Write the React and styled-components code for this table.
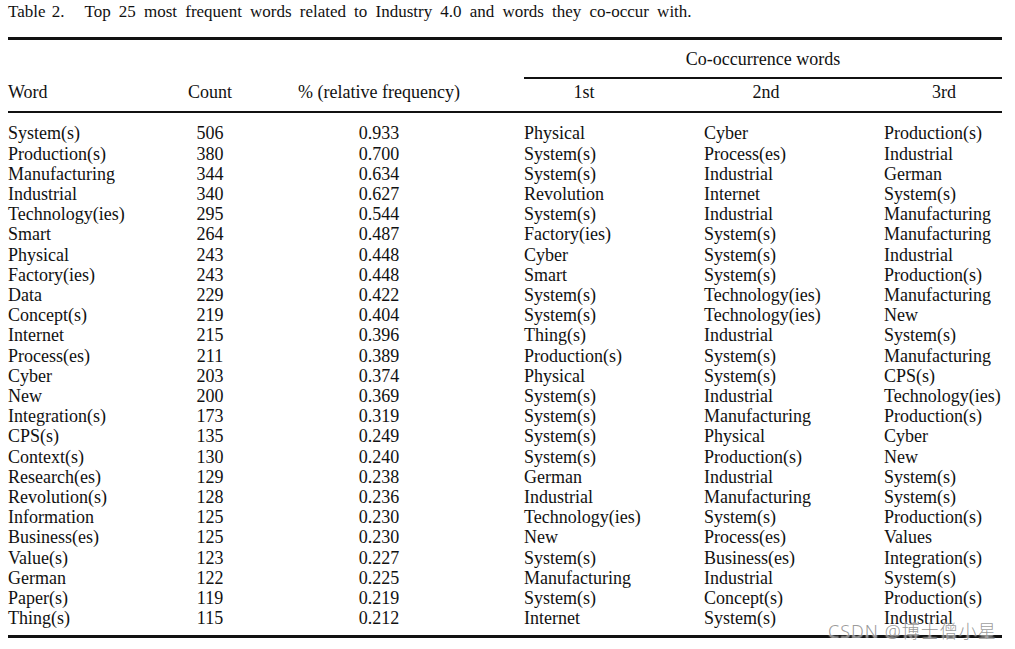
import React from "react";
import styled, { createGlobalStyle } from "styled-components";

const GlobalStyle = createGlobalStyle`
  html, body {
    margin: 0;
    padding: 0;
    background: #ffffff;
  }
  body {
    font-family: "Liberation Serif", "Times New Roman", serif;
    color: #111;
  }
`;

const Page = styled.div`
  position: relative;
  width: 1015px;
  height: 649px;
  padding: 3px 13px 0 8px;
  box-sizing: border-box;
  overflow: hidden;
`;

const Caption = styled.div`
  font-size: 17px;
  line-height: 18px;
  word-spacing: 3.9px;
  white-space: nowrap;
  margin-bottom: 16px;
`;

const Label = styled.span`
  margin-right: 20px;
  word-spacing: 2px;
`;

const Rule = styled.div`
  height: ${(p) => p.$size}px;
  background: #111;
`;

const Grid = styled.div`
  display: grid;
  grid-template-columns: 150px 104px 234px 28px 180px 180px 118px;
  font-size: 18px;
  line-height: 20.2px;
`;

const GroupHead = styled.div`
  grid-column: 5 / 8;
  text-align: center;
  padding: 9px 0 8px 0;
`;

const GroupRule = styled.div`
  grid-column: 5 / 8;
  height: 2px;
  background: #111;
`;

const Spacer = styled.div`
  grid-column: 1 / 5;
  grid-row: 1 / 3;
`;

const Head = styled.div`
  padding: 3px 0 9px 0;
  text-align: ${(p) => p.$align || "left"};
`;

const CoHead = styled.div`
  padding: 3px 0 9px 0;
  width: ${(p) => p.$w}px;
  text-align: center;
`;

const Cell = styled.div`
  text-align: ${(p) => p.$align || "left"};
  white-space: nowrap;
`;

const Body = styled.div`
  padding: 10px 0 7px 0;
`;

const Watermark = styled.div`
  position: absolute;
  left: 828px;
  top: 620px;
  font-family: "Noto Sans", "Noto Sans CJK SC", sans-serif;
  font-size: 18px;
  font-weight: 300;
  line-height: 22px;
  color: rgba(110, 110, 110, 0.7);
  letter-spacing: 1px;
  text-shadow: 0 0 2px #fff, 0 0 2px #fff;
  white-space: nowrap;
`;

const rows = [
  ["System(s)", "506", "0.933", "Physical", "Cyber", "Production(s)"],
  ["Production(s)", "380", "0.700", "System(s)", "Process(es)", "Industrial"],
  ["Manufacturing", "344", "0.634", "System(s)", "Industrial", "German"],
  ["Industrial", "340", "0.627", "Revolution", "Internet", "System(s)"],
  ["Technology(ies)", "295", "0.544", "System(s)", "Industrial", "Manufacturing"],
  ["Smart", "264", "0.487", "Factory(ies)", "System(s)", "Manufacturing"],
  ["Physical", "243", "0.448", "Cyber", "System(s)", "Industrial"],
  ["Factory(ies)", "243", "0.448", "Smart", "System(s)", "Production(s)"],
  ["Data", "229", "0.422", "System(s)", "Technology(ies)", "Manufacturing"],
  ["Concept(s)", "219", "0.404", "System(s)", "Technology(ies)", "New"],
  ["Internet", "215", "0.396", "Thing(s)", "Industrial", "System(s)"],
  ["Process(es)", "211", "0.389", "Production(s)", "System(s)", "Manufacturing"],
  ["Cyber", "203", "0.374", "Physical", "System(s)", "CPS(s)"],
  ["New", "200", "0.369", "System(s)", "Industrial", "Technology(ies)"],
  ["Integration(s)", "173", "0.319", "System(s)", "Manufacturing", "Production(s)"],
  ["CPS(s)", "135", "0.249", "System(s)", "Physical", "Cyber"],
  ["Context(s)", "130", "0.240", "System(s)", "Production(s)", "New"],
  ["Research(es)", "129", "0.238", "German", "Industrial", "System(s)"],
  ["Revolution(s)", "128", "0.236", "Industrial", "Manufacturing", "System(s)"],
  ["Information", "125", "0.230", "Technology(ies)", "System(s)", "Production(s)"],
  ["Business(es)", "125", "0.230", "New", "Process(es)", "Values"],
  ["Value(s)", "123", "0.227", "System(s)", "Business(es)", "Integration(s)"],
  ["German", "122", "0.225", "Manufacturing", "Industrial", "System(s)"],
  ["Paper(s)", "119", "0.219", "System(s)", "Concept(s)", "Production(s)"],
  ["Thing(s)", "115", "0.212", "Internet", "System(s)", "Industrial"],
];

const App = () => {
  return (
    <Page>
      <GlobalStyle />
      <Caption>
        <Label>Table 2.</Label>Top 25 most frequent words related to Industry 4.0 and words they co-occur with.
      </Caption>
      <Rule $size={3} />
      <Grid>
        <Spacer />
        <GroupHead>Co-occurrence words</GroupHead>
        <GroupRule />
        <Head>Word</Head>
        <Head $align="center">Count</Head>
        <Head $align="center">% (relative frequency)</Head>
        <Head />
        <CoHead $w={120}>1st</CoHead>
        <CoHead $w={124}>2nd</CoHead>
        <CoHead $w={120}>3rd</CoHead>
      </Grid>
      <Rule $size={2} />
      <Body>
        <Grid>
          {rows.map((r) => (
            <React.Fragment key={r[0]}>
              <Cell>{r[0]}</Cell>
              <Cell $align="center">{r[1]}</Cell>
              <Cell $align="center">{r[2]}</Cell>
              <Cell />
              <Cell>{r[3]}</Cell>
              <Cell>{r[4]}</Cell>
              <Cell>{r[5]}</Cell>
            </React.Fragment>
          ))}
        </Grid>
      </Body>
      <Rule $size={3} />
      <Watermark>CSDN @博士僧小星</Watermark>
    </Page>
  );
};

export default App;
